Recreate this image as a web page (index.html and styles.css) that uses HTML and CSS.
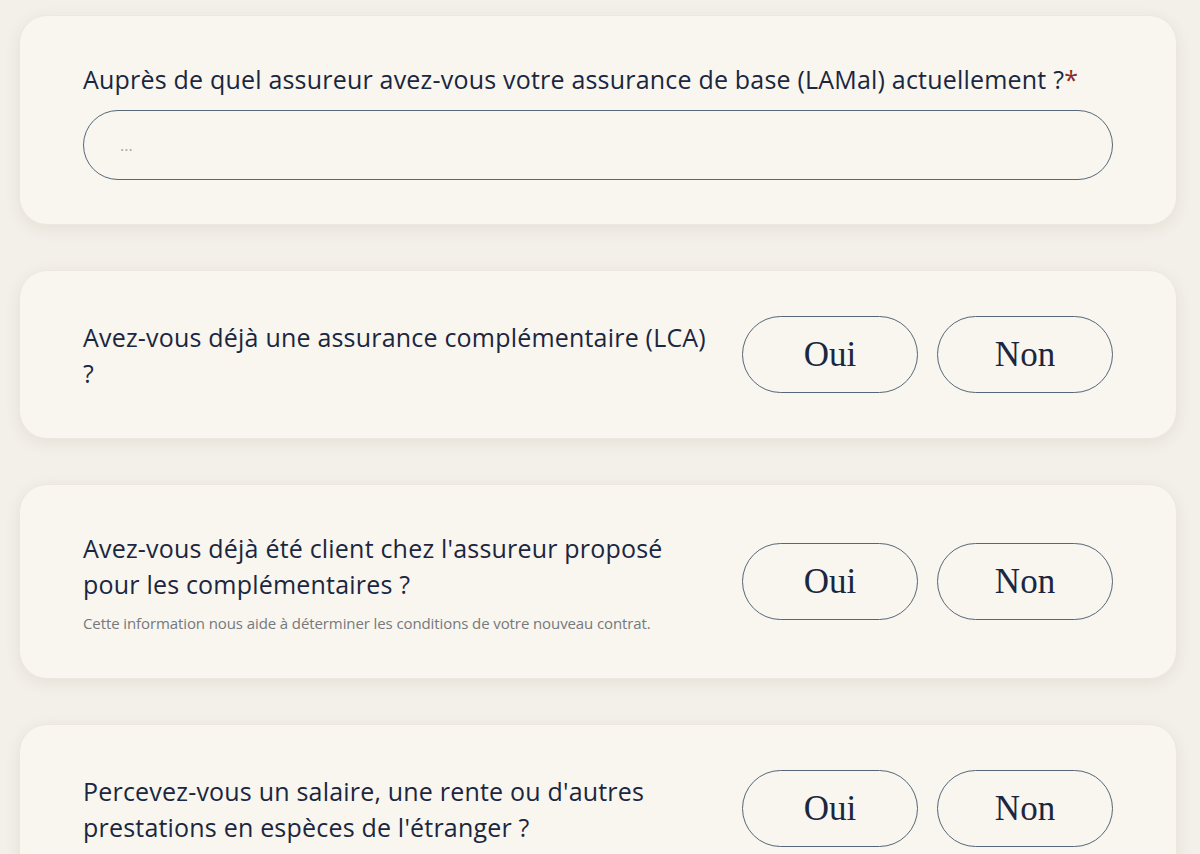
FILE: index.html
```html
<!DOCTYPE html>
<html lang="fr">
<head>
  <meta charset="UTF-8" />
  <meta name="viewport" content="width=device-width, initial-scale=1.0"/>
  <title>Questionnaire - Assurance</title>
  <link rel="stylesheet" href="styles.css">
</head>
<body>
  <div class="page">
    <form id="insuranceForm" class="question-list">

      <!-- Current LAMal insurer -->
      <div class="question-card">
        <label class="question-title" for="currentInsurer">Auprès de quel assureur avez-vous votre assurance de base (LAMal) actuellement ?<span class="required">*</span></label>
        <input type="text" id="currentInsurer" name="currentInsurer" class="text-input" placeholder="...">
      </div>

      <!-- LCA -->
      <div class="question-card row">
        <div class="question-text">
          <div class="question-title">Avez-vous déjà une assurance complémentaire (LCA) ?</div>
        </div>
        <div class="choice-group">
          <button type="button" class="choice-btn">Oui</button>
          <button type="button" class="choice-btn">Non</button>
        </div>
      </div>

      <!-- Previous client -->
      <div class="question-card row">
        <div class="question-text">
          <div class="question-title">Avez-vous déjà été client chez l'assureur proposé pour les complémentaires ?</div>
          <div class="question-hint">Cette information nous aide à déterminer les conditions de votre nouveau contrat.</div>
        </div>
        <div class="choice-group">
          <button type="button" class="choice-btn">Oui</button>
          <button type="button" class="choice-btn">Non</button>
        </div>
      </div>

      <!-- Foreign income -->
      <div class="question-card row">
        <div class="question-text">
          <div class="question-title">Percevez-vous un salaire, une rente ou d'autres prestations en espèces de l'étranger ?</div>
        </div>
        <div class="choice-group">
          <button type="button" class="choice-btn">Oui</button>
          <button type="button" class="choice-btn">Non</button>
        </div>
      </div>

    </form>
  </div>
</body>
</html>
```

FILE: styles.css
```css
body {
  margin: 0;
  background-color: #f3f0e9;
  font-family: "Open Sans", "Noto Sans", sans-serif;
  color: #1b2640;
}

.page {
  padding: 15px 23px 0 19px;
}

.question-list {
  display: flex;
  flex-direction: column;
  gap: 45px;
}

.question-card {
  background-color: #f8f6ef;
  border: 1px solid #ece8df;
  border-radius: 28px;
  padding: 45px 63px 44px;
  box-shadow: 0 4px 16px rgba(60, 50, 30, 0.08);
}

.question-card.row {
  display: flex;
  align-items: center;
  gap: 24px;
  padding-bottom: 45px;
}

.question-text {
  flex: 1;
  min-width: 0;
}

.question-title {
  display: block;
  font-size: 25px;
  line-height: 36px;
  letter-spacing: 0.2px;
}

.required {
  color: #8b2a2a;
}

.text-input {
  display: block;
  width: 100%;
  box-sizing: border-box;
  margin-top: 13px;
  height: 70px;
  padding: 0 36px;
  border: 1px solid #56677a;
  border-radius: 35px;
  background-color: transparent;
  font-family: inherit;
  font-size: 16px;
  color: #1b2640;
}

.text-input::placeholder {
  color: #a8a8a4;
}

.question-hint {
  margin-top: 11px;
  font-size: 15px;
  line-height: 20px;
  letter-spacing: -0.1px;
  color: #77787c;
}

.choice-group {
  display: flex;
  gap: 19px;
  flex-shrink: 0;
}

.choice-btn {
  width: 176px;
  height: 77px;
  border: 1px solid #56677a;
  border-radius: 39px;
  background-color: transparent;
  font-family: "Liberation Serif", serif;
  font-size: 35px;
  color: #1b2640;
  cursor: pointer;
}
```
